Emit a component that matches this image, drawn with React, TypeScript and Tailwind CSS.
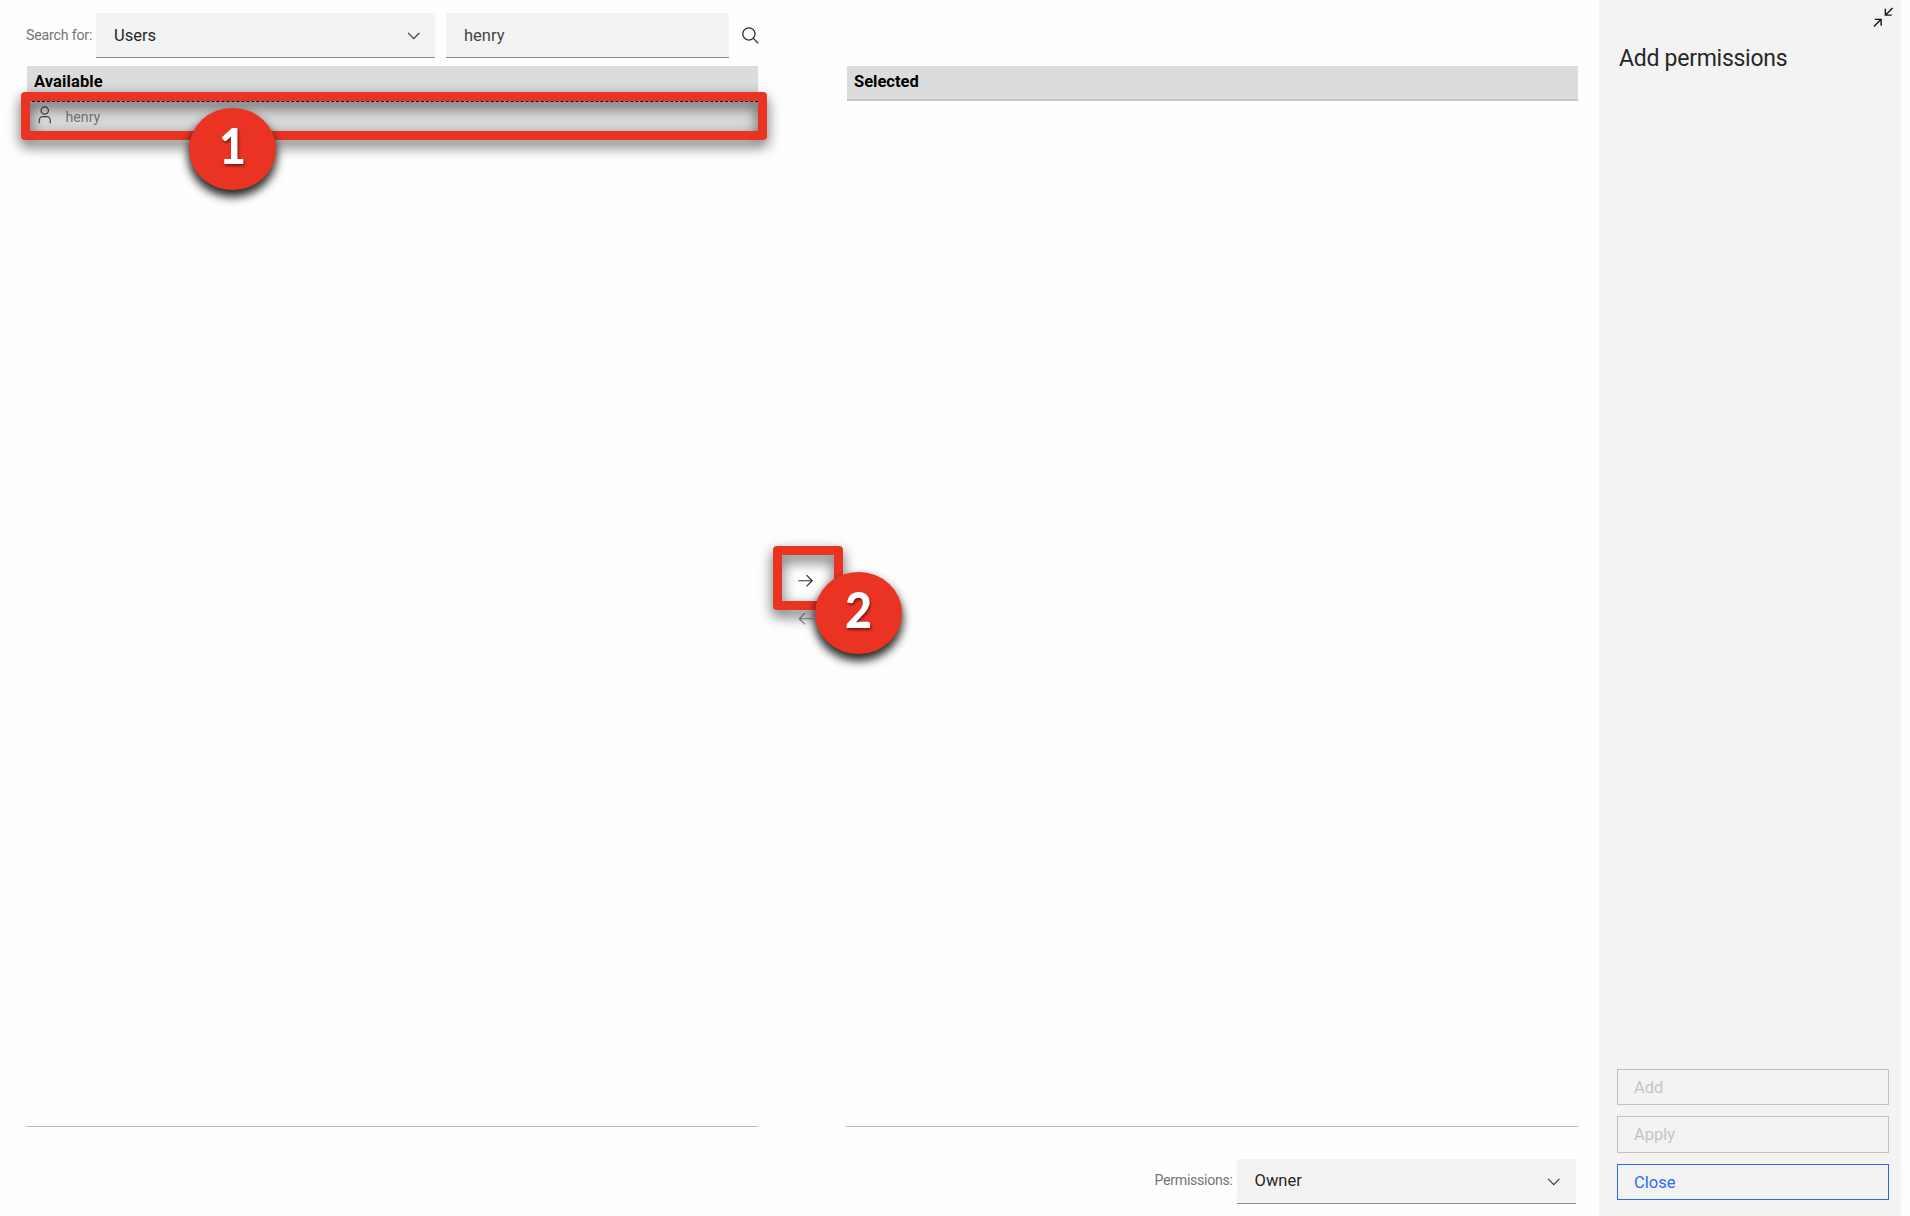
import React from "react";

type IconProps = { className?: string; d: string };

const ARROW_RIGHT = "M18 6 16.57 7.393 24.15 15H4v2h20.15l-7.58 7.573L18 26l10-10z";
const ARROW_LEFT = "M14 26 15.41 24.59 7.83 17H28v-2H7.83l7.58-7.59L14 6 4 16z";
const CHEVRON = "M16 22 6 12l1.4-1.4 8.6 8.6 8.6-8.6L26 12z";
const SEARCH =
  "M29 27.586l-7.552-7.552a11.018 11.018 0 1 0-1.414 1.414L27.586 29zM4 13a9 9 0 1 1 9 9 9.01 9.01 0 0 1-9-9z";
const USER =
  "M16 4a5 5 0 1 1-5 5 5 5 0 0 1 5-5m0-2a7 7 0 1 0 7 7A7 7 0 0 0 16 2zM26 30H24V25a5 5 0 0 0-5-5H13a5 5 0 0 0-5 5v5H6V25a7 7 0 0 1 7-7h6a7 7 0 0 1 7 7z";
const MINIMIZE =
  "M4 18v2h6.586L2 28.582 3.414 30 12 21.414V28h2V18zM30 3.416 28.592 2 20 10.586V4h-2v10h10v-2h-6.586z";

function Icon({ className = "", d }: IconProps) {
  return (
    <svg viewBox="0 0 32 32" fill="currentColor" className={`block shrink-0 ${className}`}>
      <path d={d} />
    </svg>
  );
}

function Select({ value }: { value: string }) {
  return (
    <div className="flex h-[45px] w-[339px] items-center justify-between border-b border-[#8a8a8a] bg-[#f3f3f3] pr-[12px] pl-[18px] text-[16.5px] text-[#262626]">
      <span className="pt-[2px]">{value}</span>
      <Icon d={CHEVRON} className="mt-[2px] size-[19.5px] text-[#3d3d3d]" />
    </div>
  );
}

function Frame({ className }: { className: string }) {
  return (
    <div
      className={`absolute rounded-[4px] border-[9px] border-[#eb3323] [filter:drop-shadow(0_6px_7px_rgba(0,0,0,0.65))] ${className}`}
    />
  );
}

function Marker({ className, label }: { className: string; label: string }) {
  return (
    <div
      className={`absolute flex h-[82px] w-[87px] items-center justify-center rounded-[50%] bg-[#eb3323] shadow-[0_6px_10px_1px_rgba(0,0,0,0.85)] ${className}`}
    >
      <span className="relative -top-[4px] scale-x-[0.93] font-['Lato'] text-[50px] leading-none font-black text-white [text-shadow:1px_2px_3px_rgba(0,0,0,0.5)]">
        {label}
      </span>
    </div>
  );
}

function PanelButton({ label, active = false }: { label: string; active?: boolean }) {
  return (
    <button
      className={`flex h-[36.5px] w-full items-center border pt-[3px] pl-[16px] text-[16.5px] ${
        active ? "border-[#2468f5] text-[#2b6bf3]" : "border-[#c1c1c1] text-[#c4c4c4]"
      }`}
    >
      {label}
    </button>
  );
}

export default function App() {
  return (
    <div className="relative flex h-[1216px] w-[1910px] overflow-hidden bg-[#fefefe] pr-[9px] font-['Roboto',sans-serif]">
      <main className="flex flex-1 flex-col pl-[26px]">
        <div className="flex h-[66px] items-start pt-[13px]">
          <span className="w-[70px] pt-[11px] text-[14.2px] leading-[22px] tracking-[-0.2px] whitespace-nowrap text-[#757575]">
            Search for:
          </span>
          <Select value="Users" />
          <div className="ml-[11px] flex h-[45px] w-[283px] items-center border-b border-[#8a8a8a] bg-[#f3f3f3] pt-[2px] pl-[18px] text-[16.5px] text-[#454545]">
            henry
          </div>
          <Icon d={SEARCH} className="mt-[13px] ml-[12px] size-[19.5px] text-[#2b2b2b]" />
        </div>

        <div className="flex h-[1061px]">
          <section className="w-[732px] border-b border-[#bcbcbc]">
            <div className="ml-px h-[35px] bg-[#dcdcdc] pl-[7px] text-[16.5px] leading-[32px] font-bold tracking-[0.1px] text-black">
              Available
            </div>
            <div className="ml-px flex h-[31px] items-start border-t border-dashed border-[#11112c] bg-[#d9d9d9] pl-[8px]">
              <Icon d={USER} className="mt-[2.5px] size-[19.5px] text-[#444]" />
              <span className="ml-[11px] pt-[4px] text-[14.2px] leading-[22px] text-[#757575]">henry</span>
            </div>
          </section>
          <div className="flex w-[88px] flex-col items-center pt-[505px]">
            <Icon d={ARROW_RIGHT} className="mr-[-7px] size-[19.5px] text-[#333]" />
            <Icon d={ARROW_LEFT} className="mt-[18.5px] mr-[-7px] size-[19.5px] text-[#8d8d8d]" />
          </div>
          <section className="w-[732px] border-b border-[#bcbcbc]">
            <div className="ml-px h-[35px] border-b-2 border-[#c6c6c6] bg-[#dcdcdc] pl-[7px] text-[16.5px] leading-[32px] font-bold text-black">
              Selected
            </div>
          </section>
        </div>

        <div className="flex items-start justify-end pt-[31.5px] pr-[23px]">
          <span className="mr-[4px] pt-[10px] text-[14.2px] leading-[22px] tracking-[-0.32px] text-[#757575]">
            Permissions:
          </span>
          <Select value="Owner" />
        </div>
      </main>

      <aside className="flex w-[302.4px] flex-col bg-[#f3f3f3] pr-[12px] pb-[16px] pl-[18.4px]">
        <div className="flex justify-end pt-[6px]">
          <Icon d={MINIMIZE} className="-mr-[5px] size-[22.5px] text-[#161616]" />
        </div>
        <h1 className="mt-[14.5px] pl-[2px] text-[23px] leading-[32px] tracking-[-0.27px] text-[#262626]">
          Add permissions
        </h1>
        <div className="mt-auto flex flex-col gap-[11px]">
          <PanelButton label="Add" />
          <PanelButton label="Apply" />
          <PanelButton label="Close" active />
        </div>
      </aside>

      <Frame className="top-[92px] left-[21px] h-[48px] w-[746px]" />
      <Marker className="top-[108px] left-[189px]" label="1" />
      <Frame className="top-[546px] left-[773px] h-[64px] w-[70px]" />
      <Marker className="top-[572px] left-[815px]" label="2" />
    </div>
  );
}
